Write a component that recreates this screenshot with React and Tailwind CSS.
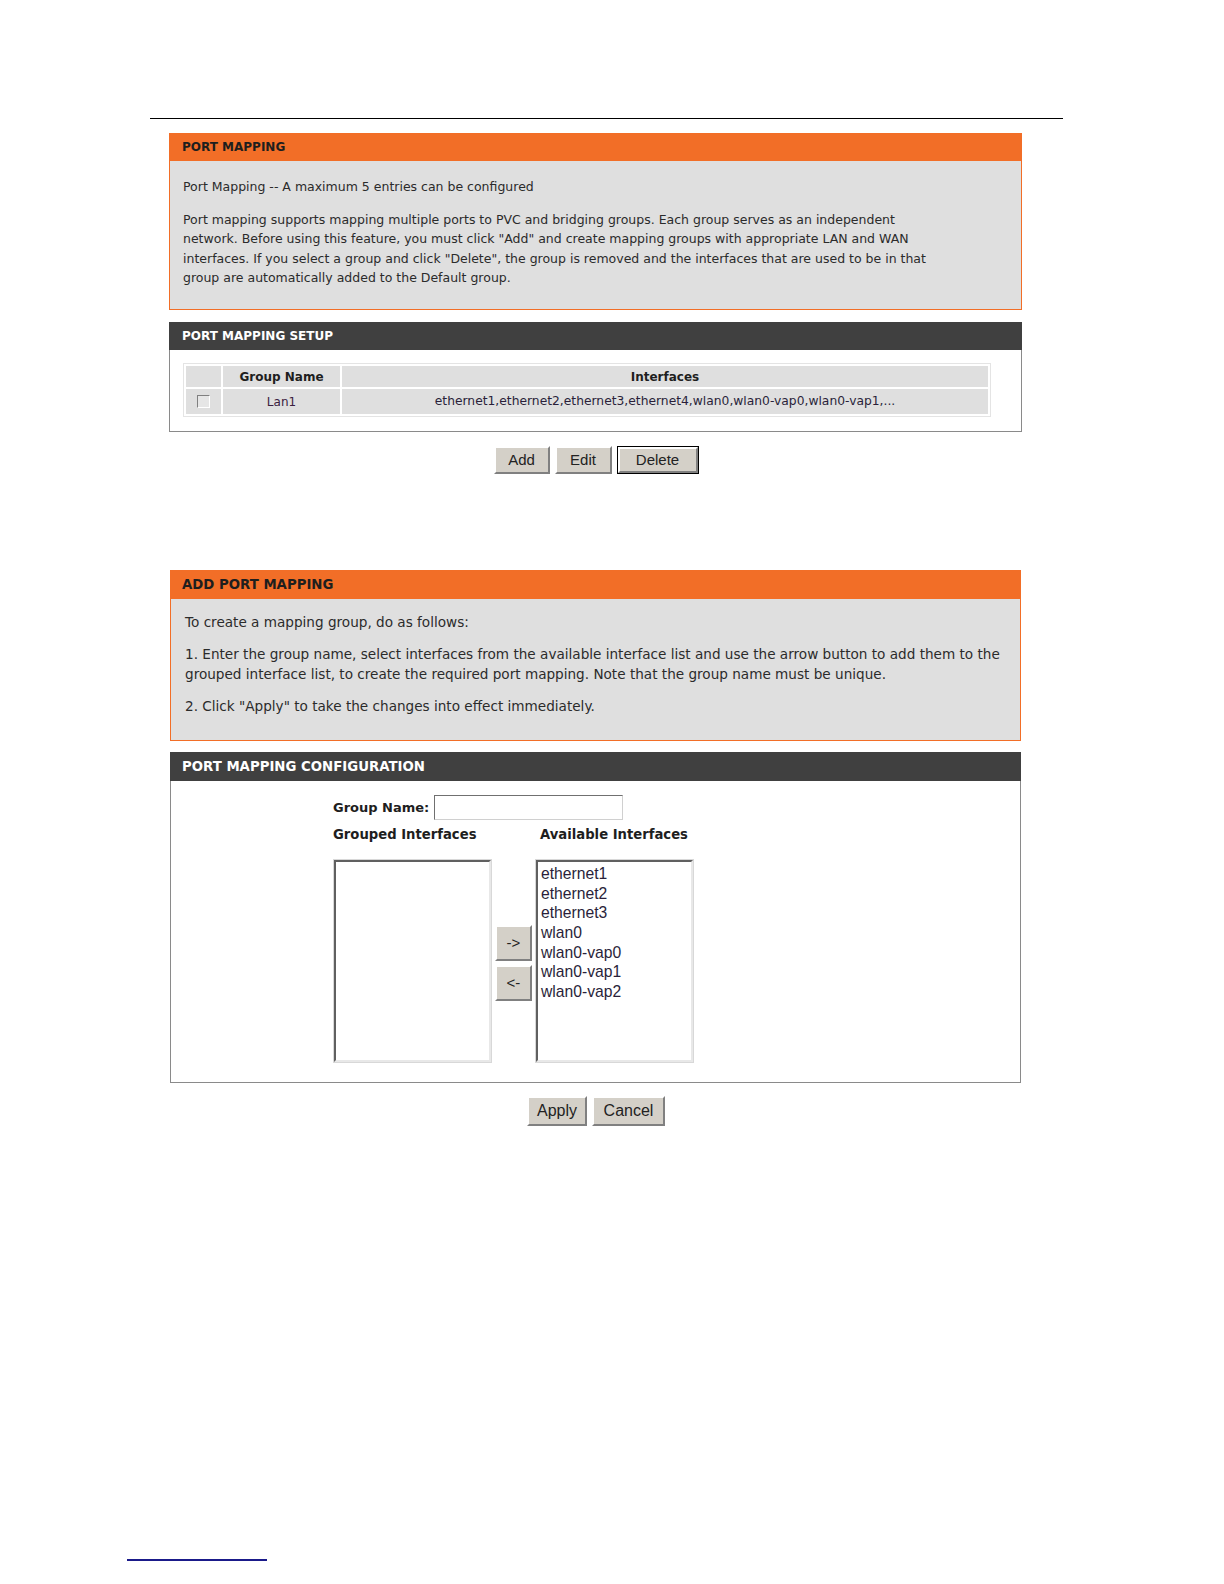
const font = { fontFamily: '"DejaVu Sans", Verdana, sans-serif' };

function Btn({ children, className = '', focused = false }) {
  return (
    <div className={`${focused ? 'border border-black' : ''}`}>
      <button
        type="button"
        className={`flex items-center justify-center border-2 border-t-white border-l-white border-b-[#808080] border-r-[#808080] bg-[#d4d0c8] text-[15px] text-[#222] font-['Liberation_Sans',Arial,sans-serif] ${className}`}
      >
        {children}
      </button>
    </div>
  );
}

function ListBox({ items = [] }) {
  return (
    <div className="h-[204px] w-[159px] border border-[#d8d8d8]">
      <div className="h-full w-full border-2 border-t-[#606060] border-l-[#606060] border-b-[#e8e8e8] border-r-[#e8e8e8] bg-white px-[3px] pt-[2px] font-['Liberation_Sans',Arial,sans-serif] text-[15.7px] leading-[19.7px] text-[#2a1f3a]">
        {items.map((it) => (
          <div key={it}>{it}</div>
        ))}
      </div>
    </div>
  );
}

export default function App() {
  const available = ['ethernet1', 'ethernet2', 'ethernet3', 'wlan0', 'wlan0-vap0', 'wlan0-vap1', 'wlan0-vap2'];
  return (
    <div className="w-full overflow-hidden bg-white pb-[20px] text-[#2b2b2b]" style={font}>
      <div className="pt-[118px]">
        <div className="ml-[150px] h-px w-[913px] bg-black" />
      </div>

      {/* port mapping info */}
      <div className="ml-[169px] mt-[14px] w-[853px]">
        <div className="flex h-[28px] items-center bg-[#f26e27] px-[13px] text-[12px] font-bold text-[#1e1e1e]">
          PORT MAPPING
        </div>
        <div className="h-[149px] border-x border-b border-[#f26e27] bg-[#dfdfdf] px-[13px] pt-[16px] text-[12.5px] leading-[19.6px] whitespace-nowrap">
          <p>Port Mapping -- A maximum 5 entries can be configured</p>
          <p className="mt-[13px]">
            Port mapping supports mapping multiple ports to PVC and bridging groups. Each group serves as an independent
            <br />
            network. Before using this feature, you must click "Add" and create mapping groups with appropriate LAN and WAN
            <br />
            interfaces. If you select a group and click "Delete", the group is removed and the interfaces that are used to be in that
            <br />
            group are automatically added to the Default group.
          </p>
        </div>
      </div>

      {/* setup table */}
      <div className="ml-[169px] mt-[12px] w-[853px]">
        <div className="flex h-[28px] items-center bg-[#404040] px-[13px] text-[12px] font-bold text-white">
          PORT MAPPING SETUP
        </div>
        <div className="h-[82px] border-x border-b border-[#8a8a8a] bg-white px-[13px] pt-[13px]">
          <table className="w-[808px] border border-[#e4e4e4] border-separate border-spacing-[2px] text-[12px]">
            <thead>
              <tr className="h-[21px]">
                <th className="w-[35px] bg-[#dfdfdf]" />
                <th className="w-[117px] bg-[#dfdfdf] font-bold text-[#1e1e1e]">Group Name</th>
                <th className="bg-[#dfdfdf] font-bold text-[#1e1e1e]">Interfaces</th>
              </tr>
            </thead>
            <tbody>
              <tr className="h-[25px]">
                <td className="bg-[#dfdfdf] text-center">
                  <div className="mx-auto h-[13px] w-[13px] border border-t-[#808080] border-l-[#808080] border-b-white border-r-white bg-[#e6e6e6]" />
                </td>
                <td className="bg-[#dfdfdf] text-center text-[#3a2040]">Lan1</td>
                <td className="bg-[#dfdfdf] text-center text-[12.3px] text-[#2a1f3a]">
                  ethernet1,ethernet2,ethernet3,ethernet4,wlan0,wlan0-vap0,wlan0-vap1,...
                </td>
              </tr>
            </tbody>
          </table>
        </div>
        <div className="mt-[14px] flex justify-center gap-[5px] pl-[1px]">
          <Btn className="h-[28px] w-[56px]">Add</Btn>
          <Btn className="h-[28px] w-[57px]">Edit</Btn>
          <Btn focused className="h-[26px] w-[80px]">Delete</Btn>
        </div>
      </div>

      {/* add port mapping info */}
      <div className="ml-[170px] mt-[96px] w-[851px]">
        <div className="flex h-[29px] items-center bg-[#f26e27] px-[12px] text-[13.3px] font-bold text-[#1e1e1e]">
          ADD PORT MAPPING
        </div>
        <div className="h-[142px] border-x border-b border-[#f26e27] bg-[#dfdfdf] px-[14px] pt-[13px] text-[13.6px] leading-[20px] whitespace-nowrap">
          <p>To create a mapping group, do as follows:</p>
          <p className="mt-[12px]">
            1. Enter the group name, select interfaces from the available interface list and use the arrow button to add them to the
            <br />
            grouped interface list, to create the required port mapping. Note that the group name must be unique.
          </p>
          <p className="mt-[12px]">2. Click "Apply" to take the changes into effect immediately.</p>
        </div>
      </div>

      {/* configuration */}
      <div className="ml-[170px] mt-[11px] w-[851px]">
        <div className="flex h-[29px] items-center bg-[#404040] px-[12px] text-[13.3px] font-bold text-white">
          PORT MAPPING CONFIGURATION
        </div>
        <div className="h-[302px] border-x border-b border-[#8a8a8a] bg-white pl-[162px] pt-[14px]">
          <div className="flex items-center gap-[5px]">
            <span className="text-[13px] font-bold text-[#1e1e1e]">Group Name:</span>
            <div className="h-[25px] w-[189px] border border-t-[#707070] border-l-[#707070] border-b-[#d0d0d0] border-r-[#d0d0d0] bg-white" />
          </div>
          <div className="mt-[5px] flex text-[13.2px] font-bold text-[#1e1e1e]">
            <span className="w-[207px]">Grouped Interfaces</span>
            <span>Available Interfaces</span>
          </div>
          <div className="mt-[14px] flex items-start">
            <ListBox />
            <div className="mx-[3px] mt-[66px] flex flex-col gap-[4px]">
              <Btn className="h-[36px] w-[37px] text-[12px]">-&gt;</Btn>
              <Btn className="h-[36px] w-[37px] text-[12px]">&lt;-</Btn>
            </div>
            <ListBox items={available} />
          </div>
        </div>
        <div className="mt-[13px] flex justify-center gap-[5px] pl-[1px]">
          <Btn className="h-[30px] w-[60px] text-[16px]">Apply</Btn>
          <Btn className="h-[30px] w-[73px] text-[16px]">Cancel</Btn>
        </div>
      </div>

      <div className="ml-[127px] mt-[433px] h-[2px] w-[140px] bg-[#1a1a8a]" />
    </div>
  );
}
